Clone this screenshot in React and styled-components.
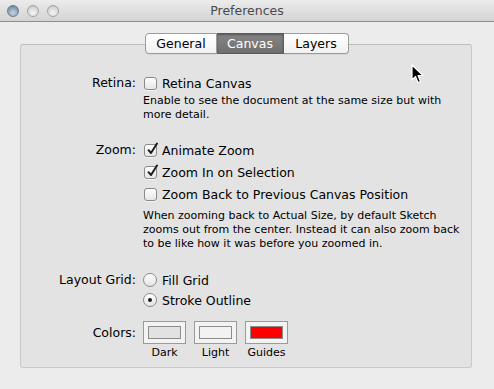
import React from 'react';
import styled, { createGlobalStyle } from 'styled-components';

const GlobalStyle = createGlobalStyle`
  html, body {
    margin: 0;
    padding: 0;
    background: #ececec;
  }
  body {
    font-family: "DejaVu Sans", "Liberation Sans", sans-serif;
    color: #000;
  }
`;

const Window = styled.div`
  position: relative;
  width: 494px;
  height: 389px;
  background: #ececec;
  display: flex;
  flex-direction: column;
  overflow: hidden;
`;

const TitleBar = styled.div`
  height: 21px;
  border-bottom: 1px solid #8f8f8f;
  background: linear-gradient(#ececec, #d3d3d3);
  display: flex;
  align-items: center;
  position: relative;
`;

const Lights = styled.div`
  display: flex;
  gap: 8px;
  padding-left: 7px;
  margin-top: 1px;
`;

const Light = styled.span`
  width: 12px;
  height: 12px;
  border-radius: 50%;
  box-sizing: border-box;
  border: 1px solid ${p => (p.$active ? '#6c7c90' : '#a4a4a4')};
  background: ${p =>
    p.$active
      ? 'radial-gradient(circle at 50% 70%, #c9d5e3 0%, #8fa3bb 55%, #5f7088 100%)'
      : 'radial-gradient(circle at 50% 70%, #f4f4f4 0%, #dcdcdc 55%, #b9b9b9 100%)'};
`;

const Title = styled.div`
  position: absolute;
  left: 0;
  right: 0;
  top: 3px;
  text-align: center;
  font-size: 12.5px;
  color: #4a4a4a;
  pointer-events: none;
`;

const Body = styled.div`
  flex: 1;
  display: flex;
  flex-direction: column;
  padding: 11px 22px 21px 20px;
`;

const Tabs = styled.div`
  display: flex;
  justify-content: center;
  position: relative;
  z-index: 2;
  margin-left: 2px;
`;

const Tab = styled.div`
  width: ${p => p.$w}px;
  height: 21px;
  box-sizing: border-box;
  display: flex;
  align-items: center;
  justify-content: center;
  font-size: 12.5px;
  border: 1px solid ${p => (p.$selected ? '#5c5c5c' : '#9c9c9c')};
  border-left-width: ${p => (p.$first ? 1 : 0)}px;
  border-radius: ${p => (p.$first ? '4px 0 0 4px' : p.$last ? '0 4px 4px 0' : '0')};
  background: ${p =>
    p.$selected
      ? 'linear-gradient(#858585, #6f6f6f)'
      : 'linear-gradient(#ffffff, #f1f1f1)'};
  color: ${p => (p.$selected ? '#fff' : '#000')};
  box-shadow: ${p => (p.$selected ? 'inset 0 1px 2px rgba(0,0,0,0.35)' : '0 1px 0 rgba(0,0,0,0.06)')};
`;

const Box = styled.div`
  flex: 1;
  margin-top: -10px;
  background: #e3e3e3;
  border: 1px solid #c9c9c9;
  border-top-color: #bcbcbc;
  border-radius: 3px;
  padding-top: 27px;
`;

const Section = styled.div`
  display: flex;
  margin-top: ${p => p.$top || 0}px;
`;

const Label = styled.div`
  width: 115px;
  flex: none;
  text-align: right;
  font-size: 12.5px;
  height: ${p => p.$h || 22}px;
  line-height: ${p => p.$h || 22}px;
  padding-right: 7px;
`;

const Controls = styled.div`
  display: flex;
  flex-direction: column;
`;

const Row = styled.div`
  display: flex;
  align-items: center;
  height: ${p => p.$h || 22}px;
  gap: 5px;
  font-size: 12.5px;
`;

const Check = styled.span`
  width: 13px;
  height: 13px;
  box-sizing: border-box;
  border: 1px solid #8a8a8a;
  border-radius: 3px;
  background: linear-gradient(#ffffff, #e6e6e6);
  box-shadow: 0 1px 0 rgba(255,255,255,0.6);
  position: relative;
  flex: none;
  margin-left: 1px;
  svg {
    position: absolute;
    left: 1px;
    top: -3px;
  }
`;

const Radio = styled.span`
  width: 14px;
  height: 14px;
  box-sizing: border-box;
  border: 1px solid #8a8a8a;
  border-radius: 50%;
  background: linear-gradient(#ffffff, #e4e4e4);
  display: flex;
  align-items: center;
  justify-content: center;
  flex: none;
  &::after {
    content: '';
    display: ${p => (p.$on ? 'block' : 'none')};
    width: 4px;
    height: 4px;
    border-radius: 50%;
    background: #1a1a1a;
  }
`;

const Note = styled.div`
  font-size: 11px;
  line-height: 14px;
  width: 320px;
  margin-top: ${p => p.$top || 0}px;
`;

const Swatches = styled.div`
  display: flex;
  gap: 8px;
`;

const Swatch = styled.div`
  display: flex;
  flex-direction: column;
  align-items: center;
  gap: 2px;
  font-size: 11px;
`;

const Well = styled.div`
  width: 43px;
  height: 23px;
  box-sizing: border-box;
  border: 1px solid #9a9a9a;
  background: #f3f3f3;
  padding: 4px;
  & > div {
    height: 100%;
    box-sizing: border-box;
    border: 1px solid #8c8c8c;
    background: ${p => p.$color};
  }
`;

const SwatchName = styled.span`
  height: 14px;
  line-height: 14px;
`;

const Cursor = styled.svg`
  position: absolute;
  left: 411px;
  top: 64px;
  z-index: 5;
`;

const Tick = () => (
  <svg width="13" height="14" viewBox="0 0 13 14">
    <path d="M2.5 8.2 L5 11 L11 1.5" fill="none" stroke="#1e1e1e" strokeWidth="2" strokeLinecap="round" strokeLinejoin="round" />
  </svg>
);

const CheckRow = ({ checked, children }) => (
  <Row>
    <Check>{checked && <Tick />}</Check>
    {children}
  </Row>
);

export default function App() {
  return (
    <>
      <GlobalStyle />
      <Window>
        <TitleBar>
          <Lights>
            <Light $active />
            <Light />
            <Light />
          </Lights>
          <Title>Preferences</Title>
        </TitleBar>
        <Body>
          <Tabs>
            <Tab $w={72} $first>General</Tab>
            <Tab $w={67} $selected>Canvas</Tab>
            <Tab $w={65} $last>Layers</Tab>
          </Tabs>
          <Box>
            <Section>
              <Label>Retina:</Label>
              <Controls>
                <CheckRow>Retina Canvas</CheckRow>
                <Note>Enable to see the document at the same size but with more detail.</Note>
              </Controls>
            </Section>
            <Section $top={17}>
              <Label>Zoom:</Label>
              <Controls>
                <CheckRow checked>Animate Zoom</CheckRow>
                <CheckRow checked>Zoom In on Selection</CheckRow>
                <CheckRow>Zoom Back to Previous Canvas Position</CheckRow>
                <Note $top={4}>
                  When zooming back to Actual Size, by default Sketch zooms out from the center. Instead it can also zoom back to be like how it was before you zoomed in.
                </Note>
              </Controls>
            </Section>
            <Section $top={19}>
              <Label $h={20}>Layout Grid:</Label>
              <Controls>
                <Row $h={20}><Radio />Fill Grid</Row>
                <Row $h={20}><Radio $on />Stroke Outline</Row>
              </Controls>
            </Section>
            <Section $top={11}>
              <Label $h={23}>Colors:</Label>
              <Swatches>
                <Swatch><Well $color="#e2e2e2"><div /></Well><SwatchName>Dark</SwatchName></Swatch>
                <Swatch><Well $color="#f2f2f2"><div /></Well><SwatchName>Light</SwatchName></Swatch>
                <Swatch><Well $color="#ff0000"><div /></Well><SwatchName>Guides</SwatchName></Swatch>
              </Swatches>
            </Section>
          </Box>
        </Body>
        <Cursor width="14" height="20" viewBox="0 0 14 20">
          <path d="M1 1 L1 16 L4.5 12.5 L7 18.5 L9.5 17.5 L7 11.5 L12 11.5 Z" fill="#000" stroke="#fff" strokeWidth="1.2" strokeLinejoin="round" />
        </Cursor>
      </Window>
    </>
  );
}
